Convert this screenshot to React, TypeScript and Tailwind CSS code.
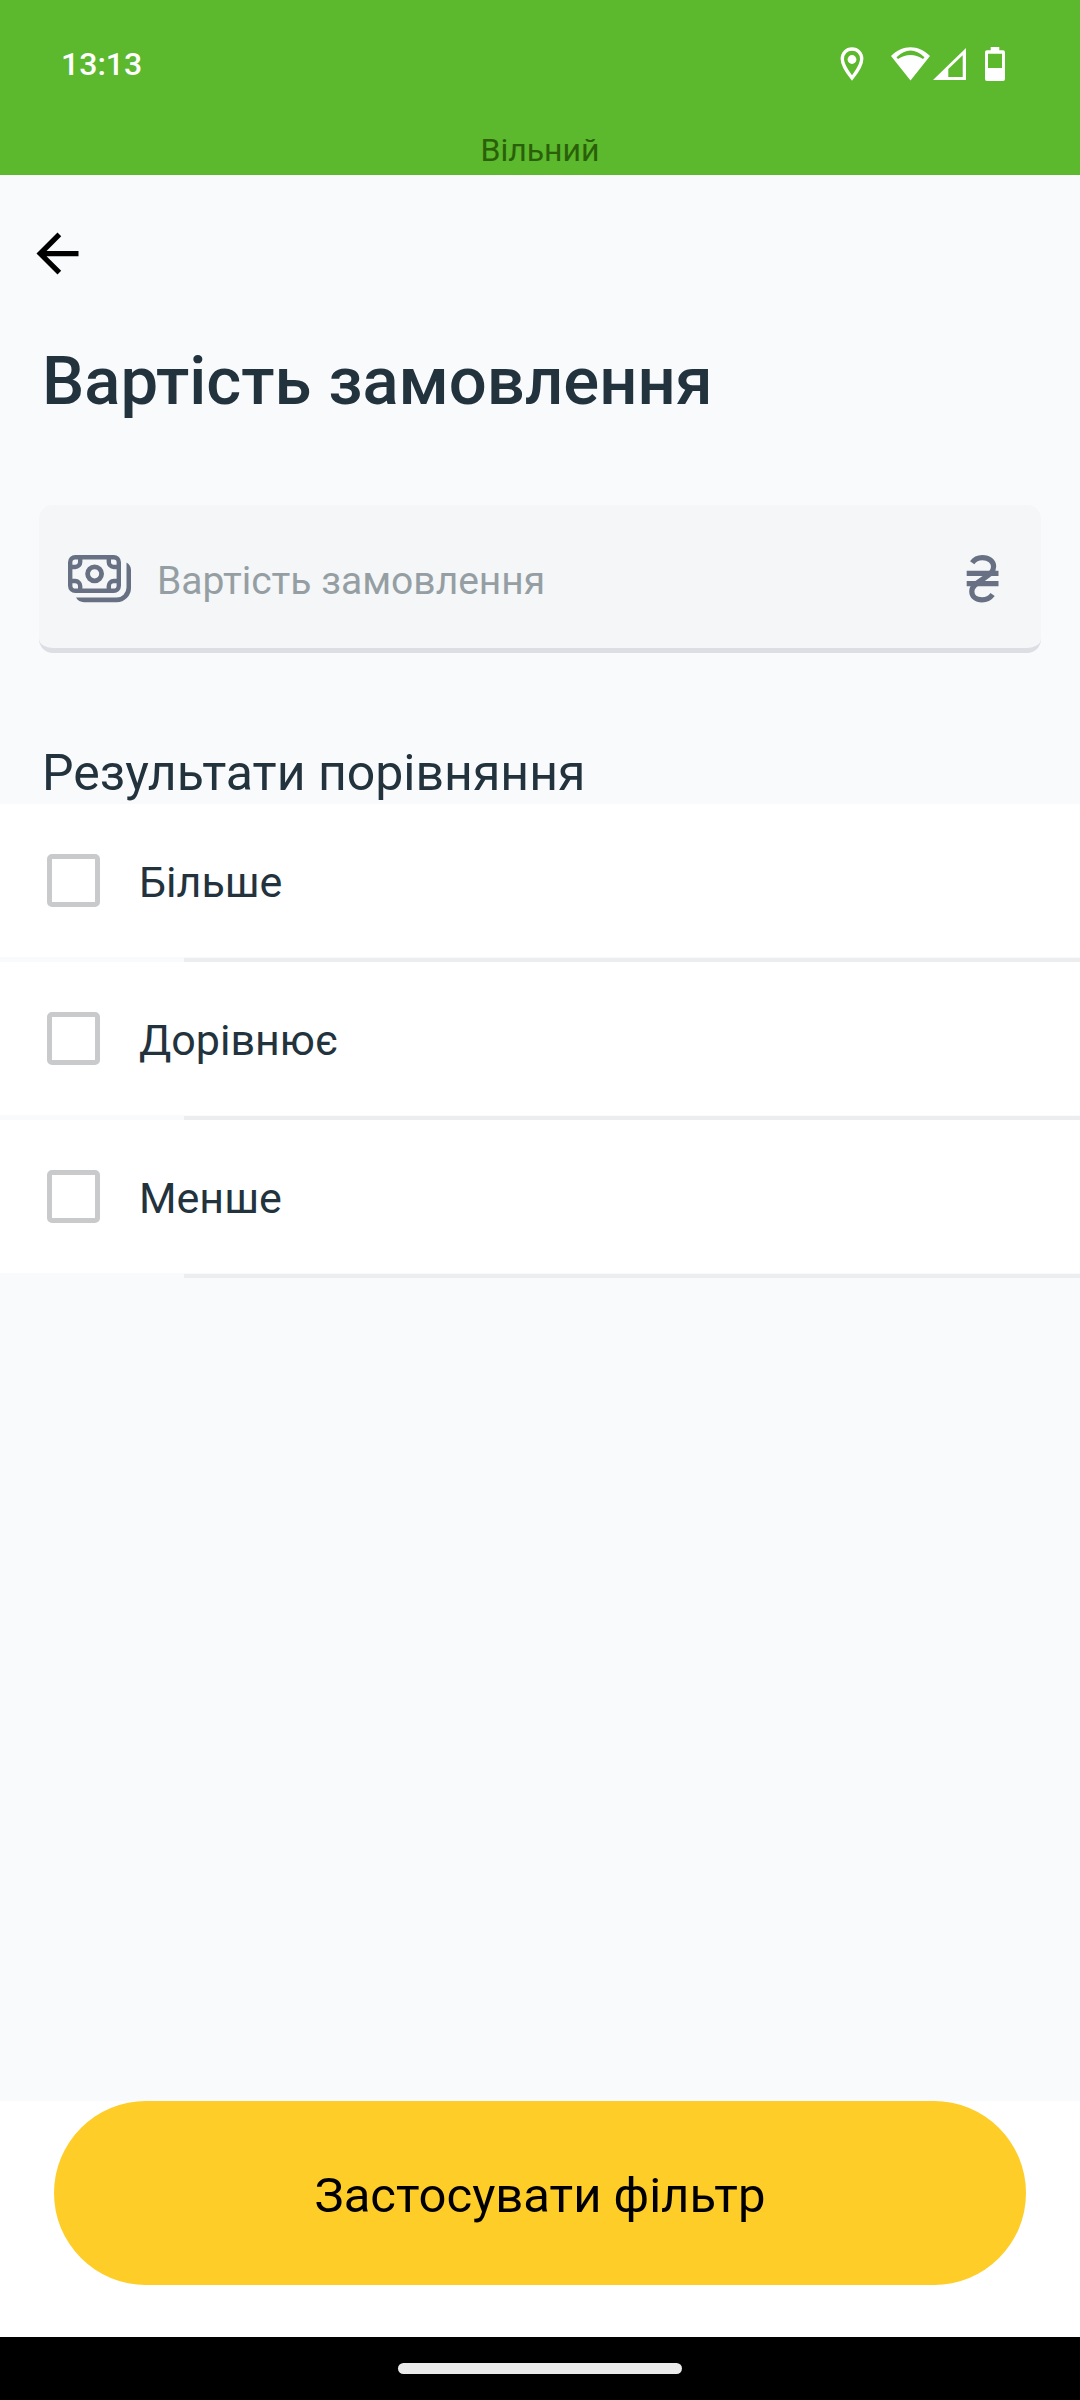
import { useState } from "react";

const OPTIONS = [
  { id: "more", label: "Більше" },
  { id: "equal", label: "Дорівнює" },
  { id: "less", label: "Менше" },
];

function PinIcon() {
  return (
    <svg className="h-[34px] w-6" viewBox="0 0 24 34" fill="none" aria-hidden="true">
      <path
        d="M12 2C6.3 2 2.3 6.3 2.3 12C2.3 19 12 31 12 31S21.7 19 21.7 12C21.7 6.3 17.7 2 12 2Z"
        stroke="currentColor"
        strokeWidth="3.4"
      />
      <circle cx="12" cy="12.5" r="4.4" fill="currentColor" />
    </svg>
  );
}

function WifiIcon() {
  return (
    <svg className="h-[34px] w-[39px]" viewBox="0 0 39 34" fill="currentColor" aria-hidden="true">
      <path
        fillRule="evenodd"
        d="M0 9C11 -2.7 28 -2.7 39 9L19.5 33.5ZM5.5 10.2L7 12Q19.5 4 32 12L33.5 10.2Q19.5 -3.2 5.5 10.2Z"
      />
    </svg>
  );
}

function SignalIcon() {
  return (
    <svg className="h-8 w-[33px]" viewBox="0 0 33 32" fill="currentColor" aria-hidden="true">
      <path fillRule="evenodd" d="M0 32L33 0V32ZM15.3 21V29H29.7V7.2Z" />
    </svg>
  );
}

function BatteryIcon() {
  return (
    <svg className="h-[34px] w-5" viewBox="0 0 20 34" fill="currentColor" aria-hidden="true">
      <path
        fillRule="evenodd"
        d="M5.7 0H14.3V3.3H18A2 2 0 0 1 20 5.3V32A2 2 0 0 1 18 34H2A2 2 0 0 1 0 32V5.3A2 2 0 0 1 2 3.3H5.7ZM3 6.7V21H17V6.7Z"
      />
    </svg>
  );
}

function BackIcon() {
  return (
    <svg className="size-[63px]" viewBox="0 0 24 24" fill="currentColor" aria-hidden="true">
      <path d="M20 11H7.83l5.59-5.59L12 4l-8 8 8 8 1.41-1.41L7.83 13H20v-2z" />
    </svg>
  );
}

function CashIcon() {
  return (
    <svg className="h-12 w-16 shrink-0" viewBox="0 0 64 48" fill="none" aria-hidden="true">
      <g stroke="currentColor" strokeWidth="4.4">
        <rect x="2.2" y="2.2" width="48.6" height="33.6" rx="5" />
        <circle cx="26.6" cy="18.8" r="7" strokeWidth="4.8" />
        <path d="M12.2 3V7A5 5 0 0 1 7.2 12H3M40.8 3V7A5 5 0 0 0 45.8 12H50M12.2 35V31A5 5 0 0 0 7.2 26H3M40.8 35V31A5 5 0 0 1 45.8 26H50" />
      </g>
      <path
        fill="currentColor"
        d="M58.5 7.5C61 9 63 11.5 63 14.8V33A14.3 14.3 0 0 1 48.7 47.3H16C12.5 47.3 9.5 45.5 8 42.6H48.5A10 10 0 0 0 58.5 32.6Z"
      />
    </svg>
  );
}

function HryvniaIcon() {
  return (
    <svg className="h-12 w-[33px] shrink-0" viewBox="0 0 33 48" fill="none" aria-hidden="true">
      <g stroke="currentColor" strokeWidth="5.2">
        <path d="M6.2 7.8C8.5 4.4 12 2.7 16.3 2.7C23 2.7 27.6 6.3 27.6 11.5C27.6 16.5 24.5 18.8 17 24C8.8 29.6 5.8 31.8 5.8 36.5C5.8 41.5 10 44.8 16 44.8C20.5 44.8 24 43 26.6 39.4" />
        <path d="M0.7 18.4H32.5M0.7 28.6H32.5" />
      </g>
    </svg>
  );
}

export default function App() {
  const [amount, setAmount] = useState("");
  const [checked, setChecked] = useState<string[]>([]);

  const toggle = (id: string) =>
    setChecked((prev) => (prev.includes(id) ? prev.filter((item) => item !== id) : [...prev, id]));

  return (
    <div className="flex min-h-screen flex-col bg-[#f9fafc] font-['Roboto',sans-serif] text-[#22333e]">
      <header className="flex flex-col bg-[#5cb82c] pt-10">
        <div className="flex h-12 items-center justify-between pr-[75px] pl-[61px] text-white">
          <time className="text-[32px] leading-12 font-medium">13:13</time>
          <div className="flex items-center">
            <PinIcon />
            <div className="ml-[27px] flex items-center gap-[3px]">
              <WifiIcon />
              <SignalIcon />
            </div>
            <div className="ml-[19px] flex">
              <BatteryIcon />
            </div>
          </div>
        </div>
        <p className="mt-[42px] pb-[5px] text-center text-[32px] leading-10 text-[#2a6009]">Вільний</p>
      </header>

      <main className="flex flex-1 flex-col">
        <button type="button" aria-label="Назад" className="mt-[47px] ml-[26px] flex self-start text-black">
          <BackIcon />
        </button>

        <h1 className="mt-14 px-[42px] text-[67px] leading-20 font-medium">Вартість замовлення</h1>

        <label className="mx-[39px] mt-[84px] flex h-[148px] items-center overflow-hidden rounded-[14px] border-b-5 border-[#dcdee4] bg-[#f4f6f8] pt-[5px] pr-[42px] pl-[29px] text-[#687184]">
          <CashIcon />
          <input
            type="text"
            inputMode="decimal"
            aria-label="Вартість замовлення"
            placeholder="Вартість замовлення"
            value={amount}
            onChange={(e) => setAmount(e.target.value)}
            className="ml-[25px] h-16 min-w-0 flex-1 bg-transparent pt-1 text-[39px] text-[#22333e] outline-none placeholder:text-[#959fa3]"
          />
          <HryvniaIcon />
        </label>

        <fieldset className="mt-[89px]">
          <legend className="h-[62px] px-[42px] text-[50px] leading-[62px]">Результати порівняння</legend>
          {OPTIONS.map(({ id, label }) => (
            <div key={id}>
              <label className="flex h-[153px] items-center gap-[39px] bg-white pl-[47px] text-[43px]">
                <input
                  type="checkbox"
                  checked={checked.includes(id)}
                  onChange={() => toggle(id)}
                  className="size-[53px] shrink-0 appearance-none rounded-[5px] border-5 border-[#c9cacc] bg-white checked:border-[#5cb82c] checked:bg-[#5cb82c]"
                />
                <span className="pt-[2px] leading-13">{label}</span>
              </label>
              <div className="mt-px ml-[184px] border-t-4 border-[#ecedef]" />
            </div>
          ))}
        </fieldset>
      </main>

      <footer>
        <div className="bg-white px-[54px] pb-[52px]">
          <button type="button" className="h-46 w-full rounded-full bg-[#fecd27] pt-[6px] text-[49px] text-black">
            Застосувати фільтр
          </button>
        </div>
        <div className="flex h-[63px] items-center justify-center bg-black">
          <div className="h-[11px] w-[284px] rounded-full bg-[#ebebeb]" />
        </div>
      </footer>
    </div>
  );
}
